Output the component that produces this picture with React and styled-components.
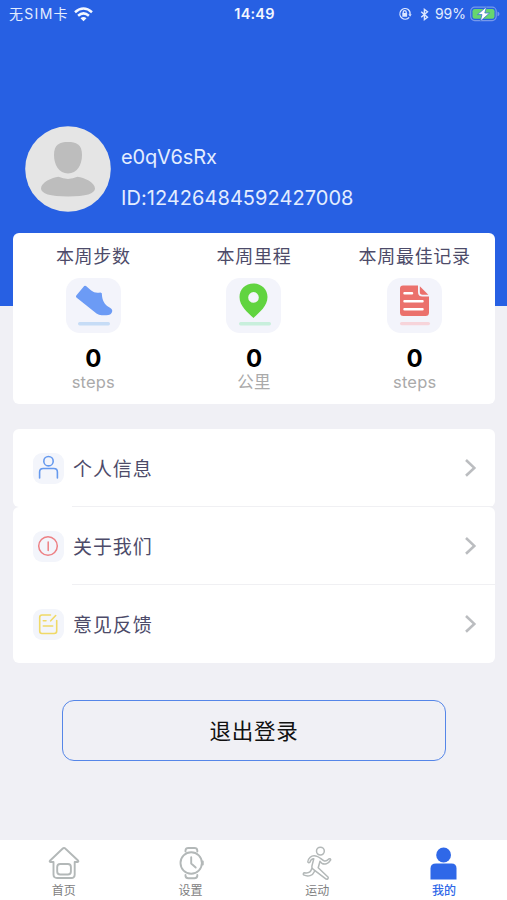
import React from "react";
import styled, { createGlobalStyle } from "styled-components";

const GlobalStyle = createGlobalStyle`
  * { box-sizing: border-box; }
  body {
    margin: 0;
    background: #f0f0f5;
    font-family: Inter, "Noto Sans CJK SC", sans-serif;
  }
`;

const Screen = styled.div`
  height: 900px;
  display: flex;
  flex-direction: column;
  overflow: hidden;
  background: #f0f0f5;
`;

const Hero = styled.header`
  height: 306px;
  flex: none;
  background: #2760e3;
  color: #e3edff;
`;

const StatusBar = styled.div`
  height: 28px;
  padding: 0 7px 0 9px;
  display: grid;
  grid-template-columns: 1fr auto 1fr;
  align-items: center;
  font-size: 14px;
  line-height: 28px;
`;

const StatusGroup = styled.div`
  display: flex;
  align-items: center;
  justify-content: ${(p) => (p.$end ? "flex-end" : "flex-start")};
`;

const Carrier = styled.span`
  margin-right: 5px;
  font-size: 14px;
  letter-spacing: 1.3px;
  white-space: nowrap;
`;

const Clock = styled.span`
  font-weight: 600;
  font-size: 14.5px;
  letter-spacing: 0.2px;
  color: #f2f6ff;
`;

const StatusIcons = styled.span`
  display: flex;
  align-items: center;
  gap: 8px;
`;

const Percent = styled.span`
  margin: 0 4px 0 6px;
  font-size: 14px;
  letter-spacing: 0;
`;

const Profile = styled.div`
  display: flex;
  align-items: center;
  margin-top: 91px;
  padding-left: 25px;
`;

const Avatar = styled.svg`
  width: 86px;
  height: 86px;
  flex: none;
`;

const Identity = styled.div`
  margin: 18px 0 0 10px;
`;

const UserLine = styled.div`
  height: 40.5px;
  line-height: 40px;
  font-size: 20px;
  letter-spacing: ${(p) => p.$spacing || "0"};
  white-space: nowrap;
`;

const Stats = styled.section`
  flex: none;
  display: grid;
  grid-template-columns: repeat(3, 1fr);
  height: 171px;
  margin: -73px 12px 0 13px;
  background: #fff;
  border-radius: 6px;
`;

const Stat = styled.div`
  display: flex;
  flex-direction: column;
  align-items: center;
  padding-top: 11px;
`;

const StatTitle = styled.div`
  height: 26px;
  line-height: 26px;
  font-size: 18px;
  letter-spacing: 0.7px;
  color: #4d4b69;
`;

const StatIcon = styled.svg`
  width: 55px;
  height: 55px;
  margin-top: 8px;
  border-radius: 14px;
  background: #f3f4fb;
`;

const StatValue = styled.div`
  height: 26px;
  margin-top: 13px;
  line-height: 26px;
  font-size: 24px;
  font-weight: 700;
  color: #000;
`;

const StatUnit = styled.div`
  line-height: 20px;
  font-size: 16.5px;
  letter-spacing: 0.2px;
  color: #aaa;
`;

const Menu = styled.nav`
  flex: none;
  margin: 25px 12px 0 13px;
`;

const MenuRow = styled.div`
  height: 78px;
  display: flex;
  align-items: center;
  padding-left: 20px;
  background: #fff;
  border-radius: ${(p) => p.$radius};
`;

const MenuIcon = styled.svg`
  width: 31px;
  height: 31px;
  flex: none;
  border-radius: 9px;
  background: #f3f5fb;
`;

const MenuBody = styled.div`
  flex: 1;
  height: 78px;
  margin-left: 8px;
  padding: 0 18px 0 1px;
  display: flex;
  align-items: center;
  justify-content: space-between;
  border-bottom: 1px solid ${(p) => (p.$last ? "transparent" : "#f0f0f3")};
`;

const MenuLabel = styled.span`
  font-size: 19px;
  letter-spacing: 0.9px;
  color: #4d4b69;
`;

const Chevron = styled.svg`
  width: 13px;
  height: 20px;
`;

const LogoutButton = styled.button`
  flex: none;
  align-self: center;
  width: 384px;
  height: 61px;
  margin: 37px 0 0 1px;
  padding: 0 0 2px;
  border: 1.5px solid #5586e8;
  border-radius: 12px;
  background: transparent;
  color: #111;
  font-family: inherit;
  font-size: 21.5px;
  letter-spacing: 0.7px;
`;

const TabBar = styled.footer`
  height: 60px;
  flex: none;
  margin-top: auto;
  display: grid;
  grid-template-columns: repeat(4, 1fr);
  background: #fff;
`;

const Tab = styled.div`
  display: flex;
  flex-direction: column;
  align-items: center;
  padding: 5px 0 0 1px;
  color: ${(p) => (p.$active ? "#2f68e8" : "#7e8081")};
  font-weight: ${(p) => (p.$active ? 500 : 400)};
  font-size: 12px;
  line-height: 20px;
`;

const TabIcon = styled.svg`
  width: 32px;
  height: 36px;
  fill: none;
  stroke: #b3b8b8;
  stroke-width: 1.9;
  stroke-linecap: round;
  stroke-linejoin: round;
`;

function WifiIcon() {
  return (
    <svg width="19" height="15" viewBox="0 0 19 15" fill="none" stroke="#f4f8ff" strokeWidth="2.5">
      <path d="M1 5.2Q9.5-2.2 18 5.2" />
      <path d="M4.1 8.7Q9.5 4 14.9 8.7" />
      <path d="M9.5 14.2L6.5 11.2Q9.5 8.6 12.5 11.2Z" fill="#f4f8ff" stroke="none" />
    </svg>
  );
}

function LockIcon() {
  return (
    <svg width="14" height="14" viewBox="0 0 14 14" fill="none" stroke="#dce7ff" strokeWidth="1.3">
      <path d="M10.2 2.5A5.3 5.3 0 1 0 11.2 10.4M10.2 2.5A5.3 5.3 0 0 1 12 7.5" />
      <path d="M10.4 7.3h3.3L12.1 9.8Z" fill="#dce7ff" stroke="none" />
      <path d="M5.2 6.5V5.2a1.5 1.5 0 0 1 3 0v1.3" />
      <rect x="4.3" y="6" width="4.8" height="3.8" rx=".6" fill="#dce7ff" stroke="none" />
    </svg>
  );
}

function BluetoothIcon() {
  return (
    <svg width="9" height="13" viewBox="0 0 9 13" fill="none" stroke="#dce7ff" strokeWidth="1.4">
      <path d="M1.2 3.7L7.5 9.2L4.4 11.6V1.4L7.5 3.8L1.2 9.3" />
    </svg>
  );
}

function BatteryIcon() {
  return (
    <svg width="30" height="16" viewBox="0 0 30 16">
      <rect x=".7" y="1.2" width="25.5" height="13.4" rx="4" fill="none" stroke="#7799ec" strokeWidth="1.2" />
      <path d="M27.5 5.5v4.8q2-.6 2-2.4t-2-2.4Z" fill="#7799ec" />
      <rect x="2.5" y="3" width="22" height="9.8" rx="2.2" fill="#67d66f" />
      <path d="M16.5.8L7.5 8.6H12L10.3 15.2L19.6 7H14.8Z" fill="#fff" stroke="#3c74d7" strokeWidth=".8" />
    </svg>
  );
}

function ShoeArt() {
  return (
    <>
      <path d="M18.2 8.1Q19 7.3 20 8.1L25.2 12.5Q29 15.8 34.5 14.4L35.8 15.3C36.2 22.8 38.2 26.5 44 29.8Q48 32.4 45 35.7Q43.5 37.5 36 37.3Q33 37.4 30.5 35.5L10.4 19.4Q9.5 18.5 10.3 17.5Z" fill="#6c9bf5" />
      <rect x="12" y="44" width="32" height="3.4" rx="1.7" fill="#c6dcf6" />
    </>
  );
}

function PinArt() {
  return (
    <>
      <path fillRule="evenodd" d="M27.5 5.5c-8 0-14 5.8-14 13.4 0 9.4 8.5 15.5 14 21 5.5-5.5 14-11.6 14-21 0-7.6-6-13.4-14-13.4Zm0 8.6a5.3 5.3 0 1 1 0 10.6 5.3 5.3 0 0 1 0-10.6Z" fill="#61d440" />
      <rect x="13" y="44" width="32" height="3.4" rx="1.7" fill="#c8efdc" />
    </>
  );
}

function RecordArt() {
  return (
    <>
      <path d="M16 7.5H31V14Q31 18.5 35.5 18.5H42V34.5Q42 38 38.5 38H16.5Q13 38 13 34.5V10.5Q13 7.5 16 7.5Z" fill="#eb716c" />
      <path d="M32.8 8.3L41.3 16.8H35.5Q32.8 16.8 32.8 14Z" fill="#eb716c" />
      <path d="M17.5 15.2H25M17.5 23.2H35.5M17.5 31.2H35.5" stroke="#fff" strokeWidth="2.5" strokeLinecap="round" />
      <rect x="13" y="44" width="30" height="3.2" rx="1.6" fill="#f7d4da" />
    </>
  );
}

const stats = [
  { title: "本周步数", value: "0", unit: "steps", Art: ShoeArt },
  { title: "本周里程", value: "0", unit: "公里", Art: PinArt },
  { title: "本周最佳记录", value: "0", unit: "steps", Art: RecordArt },
];

function PersonArt() {
  return (
    <g fill="none" stroke="#6599ee" strokeWidth="1.6" strokeLinecap="round">
      <circle cx="15.5" cy="8.2" r="4.7" />
      <path d="M6.6 25V19Q6.6 15.5 10.2 15.5H20.8Q24.4 15.5 24.4 19V25" />
    </g>
  );
}

function InfoArt() {
  return (
    <g fill="none" stroke="#ed8084" strokeWidth="1.5" strokeLinecap="round">
      <circle cx="15" cy="15" r="9.3" />
      <path d="M15.2 11V19.5" />
    </g>
  );
}

function NoteArt() {
  return (
    <g fill="none" stroke="#f0d967" strokeWidth="1.6" strokeLinecap="round" strokeLinejoin="round">
      <path d="M17.5 6H9Q6.7 6 6.7 8.3V22Q6.7 24.5 9 24.5H21.2Q23.7 24.5 23.7 22V11.5" />
      <path d="M22.7 6.5L17.7 11.8M10.3 11.8H13M10.3 17H19.7" />
    </g>
  );
}

const menu = [
  { label: "个人信息", Art: PersonArt, radius: "6px" },
  { label: "关于我们", Art: InfoArt, radius: "6px 6px 0 0" },
  { label: "意见反馈", Art: NoteArt, radius: "0 0 6px 6px" },
];

function HomeArt() {
  return (
    <>
      <path d="M16 3Q16.8 3 17.5 3.7L30 15.5Q31 16.8 29.5 17H26.7V29.5Q26.7 33 23.2 33H9Q5.5 33 5.5 29.5V17H2.5Q1 16.8 2.2 15.5L14.5 3.7Q15.2 3 16 3Z" />
      <rect x="9.2" y="19" width="13.7" height="10.5" rx="3" />
    </>
  );
}

function WatchArt() {
  return (
    <>
      <circle cx="16.2" cy="18" r="10.7" />
      <path d="M10.5 6.5V5.3Q10.8 3 13.3 3H19.5Q22 3 22.3 5.3V6.5M10.5 30V31Q10.8 33.2 13.3 33.2H19.5Q22 33.2 22.3 31V30M16.2 12.3V18.5L20.7 22.5M27.8 16.5v3" />
    </>
  );
}

function RunnerArt() {
  return (
    <g strokeWidth="1.5">
      <circle cx="19.4" cy="6.1" r="3.9" />
      <path d="M16.7 11.6C14 10.4 11.2 10.4 9.2 12.2C7.6 13.6 6.8 15.3 6.8 17Q7.6 18.5 9 17.2C9.4 15.2 10.5 14 12.8 13.8L10.9 21.1Q10.4 23 12 24.2L25.1 34.1Q27.4 34.5 27.2 32.2L17.2 22.8L19 16.3C20.6 19 22.9 19.4 25.2 18.8Q28.5 17.2 29.7 14.8Q29.2 13.2 27.8 14Q25.5 16.4 23.4 15.9C21.3 15.4 19.4 12.7 16.7 11.6Z" />
      <path d="M10.7 23.7C10 26.9 8 28.6 3.3 27.8Q1.7 28.4 2.6 29.9C7.2 32.2 11.7 30.7 13.6 26.2" />
    </g>
  );
}

function MineArt() {
  return (
    <g fill="#2f68e8" stroke="none">
      <circle cx="15.6" cy="10" r="7.4" />
      <path d="M8 18.4H23.5Q28.5 18.4 28.5 23.4V34.4H2.5V23.4Q2.5 18.4 8 18.4Z" />
    </g>
  );
}

const tabs = [
  { label: "首页", Art: HomeArt },
  { label: "设置", Art: WatchArt },
  { label: "运动", Art: RunnerArt },
  { label: "我的", Art: MineArt, active: true },
];

export default function App() {
  return (
    <Screen>
      <GlobalStyle />
      <Hero>
        <StatusBar>
          <StatusGroup>
            <Carrier>无SIM卡</Carrier>
            <WifiIcon />
          </StatusGroup>
          <Clock>14:49</Clock>
          <StatusGroup $end>
            <StatusIcons>
              <LockIcon />
              <BluetoothIcon />
            </StatusIcons>
            <Percent>99%</Percent>
            <BatteryIcon />
          </StatusGroup>
        </StatusBar>
        <Profile>
          <Avatar viewBox="0 0 86 86">
            <circle cx="43" cy="43" r="42.8" fill="#e5e5e5" />
            <path d="M43 16C51 16 57 18 57 29C57 39 52 47.5 43 47.5S29 39 29 29C29 18 35 16 43 16Z" fill="#bdbdbd" />
            <path d="M33.5 50.8Q43 55 52.5 50.8C59 51.5 70 56.5 70 62.5C70 67.5 61 70.5 43 70.5S16 67.5 16 62.5C16 56.5 27 51.5 33.5 50.8Z" fill="#bdbdbd" />
          </Avatar>
          <Identity>
            <UserLine $spacing="-0.15px">e0qV6sRx</UserLine>
            <UserLine $spacing="0.05px">ID:12426484592427008</UserLine>
          </Identity>
        </Profile>
      </Hero>
      <Stats>
        {stats.map(({ title, value, unit, Art }) => (
          <Stat key={title}>
            <StatTitle>{title}</StatTitle>
            <StatIcon viewBox="0 0 55 55"><Art /></StatIcon>
            <StatValue>{value}</StatValue>
            <StatUnit>{unit}</StatUnit>
          </Stat>
        ))}
      </Stats>
      <Menu>
        {menu.map(({ label, Art, radius }, i) => (
          <MenuRow key={label} $radius={radius}>
            <MenuIcon viewBox="0 0 31 31"><Art /></MenuIcon>
            <MenuBody $last={i === menu.length - 1}>
              <MenuLabel>{label}</MenuLabel>
              <Chevron viewBox="0 0 13 20" fill="none" stroke="#bbbdc0" strokeWidth="2.6">
                <path d="M2 2L10.3 9.9L2 17.8" />
              </Chevron>
            </MenuBody>
          </MenuRow>
        ))}
      </Menu>
      <LogoutButton>退出登录</LogoutButton>
      <TabBar>
        {tabs.map(({ label, Art, active }) => (
          <Tab key={label} $active={active}>
            <TabIcon viewBox="0 0 32 36"><Art /></TabIcon>
            {label}
          </Tab>
        ))}
      </TabBar>
    </Screen>
  );
}
